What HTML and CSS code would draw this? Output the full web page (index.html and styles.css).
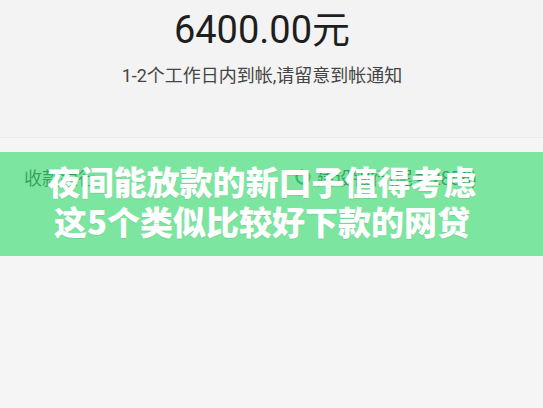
FILE: index.html
```html
<!DOCTYPE html>
<html lang="zh-CN">
<head>
<meta charset="utf-8">
<link rel="stylesheet" href="styles.css">
</head>
<body>
<div class="page">
  <section class="summary">
    <div class="amount">6400.00元</div>
    <div class="note">1-2个工作日内到帐,请留意到帐通知</div>
  </section>
  <section class="detail">
    <div class="row">
      <span class="label">收款银行</span>
      <span class="bank">
        <svg class="logo" viewBox="0 0 16 16" width="16" height="16"><circle cx="8" cy="8" r="6.5" fill="none" stroke="#1f6a3a" stroke-width="2.4" stroke-dasharray="30 6"/></svg>
        <span class="bank-name">建设银行(尾号2856)</span>
      </span>
    </div>
    <div class="banner">
      <div class="title">夜间能放款的新口子值得考虑<br>这5个类似比较好下款的网贷</div>
    </div>
  </section>
</div>
</body>
</html>
```
FILE: styles.css
```css
* { box-sizing: border-box; }
html, body { margin: 0; padding: 0; }
body {
  width: 543px;
  height: 408px;
  overflow: hidden;
  background: #f5f5f5;
  font-family: Roboto, "Noto Sans CJK SC", sans-serif;
}
.page { display: flex; flex-direction: column; }
.summary {
  height: 138px;
  background: #f3f3f3;
  border-bottom: 1px solid #ebebeb;
  display: flex;
  flex-direction: column;
  align-items: center;
  padding: 5px 19px 0 0;
}
.amount {
  font-size: 38px;
  line-height: 50px;
  color: #1e1e1e;
}
.note {
  margin-top: 9px;
  font-size: 18px;
  line-height: 24px;
  color: #454545;
}
.detail {
  position: relative;
  height: 270px;
  background: #f5f5f5;
}
.row {
  display: flex;
  justify-content: space-between;
  align-items: center;
  padding: 26px 66px 0 24px;
  font-size: 18px;
  color: #111;
  font-family: "Noto Sans CJK SC", sans-serif;
}
.bank { display: flex; align-items: center; gap: 6px; }
.banner {
  position: absolute;
  left: 0;
  right: 0;
  top: 14px;
  height: 104px;
  background: rgba(72, 224, 126, 0.7);
  display: flex;
  align-items: center;
  justify-content: center;
  padding: 0 19px 6px 0;
}
.title {
  font-family: "Noto Sans CJK SC", sans-serif;
  font-weight: 900;
  font-size: 33px;
  line-height: 40px;
  color: #fff;
  text-align: center;
  text-shadow: 0 1px 1px rgba(0,0,0,0.08);
}
```
